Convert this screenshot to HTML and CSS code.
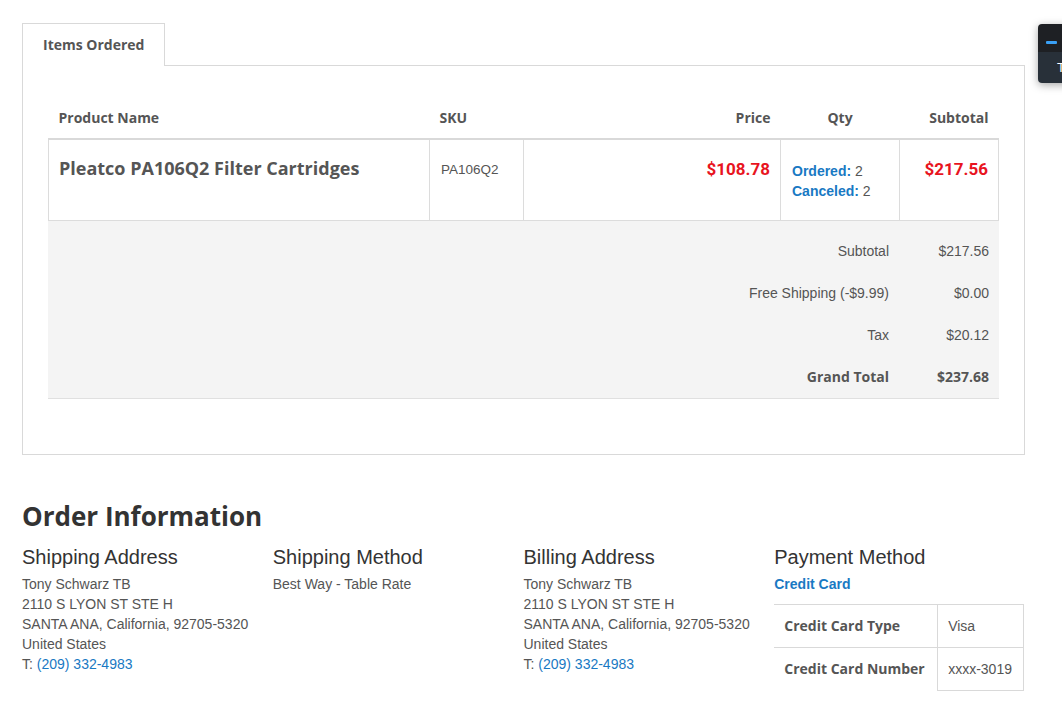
FILE: index.html
```html
<!DOCTYPE html>
<html>
<head>
<meta charset="utf-8">
<link rel="stylesheet" href="styles.css">
</head>
<body>
<div class="page">
  <div class="tabs">
    <div class="tab">Items Ordered</div>
  </div>
  <div class="tab-content">
    <table class="items">
      <thead>
        <tr>
          <th class="c-name">Product Name</th>
          <th class="c-sku">SKU</th>
          <th class="c-price">Price</th>
          <th class="c-qty">Qty</th>
          <th class="c-sub">Subtotal</th>
        </tr>
      </thead>
      <tbody>
        <tr class="item-row">
          <td class="c-name"><span class="pname">Pleatco PA106Q2 Filter Cartridges</span></td>
          <td class="c-sku">PA106Q2</td>
          <td class="c-price"><span class="money">$108.78</span></td>
          <td class="c-qty">
            <div class="qline"><span class="qlabel">Ordered:</span> 2</div>
            <div class="qline"><span class="qlabel">Canceled:</span> 2</div>
          </td>
          <td class="c-sub"><span class="money">$217.56</span></td>
        </tr>
      </tbody>
    </table>
    <div class="totals">
      <div class="trow"><span class="tlabel">Subtotal</span><span class="tval">$217.56</span></div>
      <div class="trow"><span class="tlabel">Free Shipping (-$9.99)</span><span class="tval">$0.00</span></div>
      <div class="trow"><span class="tlabel">Tax</span><span class="tval">$20.12</span></div>
      <div class="trow grand"><span class="tlabel">Grand Total</span><span class="tval">$237.68</span></div>
    </div>
  </div>

  <h2 class="info-title">Order Information</h2>
  <div class="info-grid">
    <div class="info-col">
      <h3>Shipping Address</h3>
      <div class="addr">Tony Schwarz TB<br>2110 S LYON ST STE H<br>SANTA ANA, California, 92705-5320<br>United States<br>T: <a>(209) 332-4983</a></div>
    </div>
    <div class="info-col">
      <h3>Shipping Method</h3>
      <div class="addr">Best Way - Table Rate</div>
    </div>
    <div class="info-col">
      <h3>Billing Address</h3>
      <div class="addr">Tony Schwarz TB<br>2110 S LYON ST STE H<br>SANTA ANA, California, 92705-5320<br>United States<br>T: <a>(209) 332-4983</a></div>
    </div>
    <div class="info-col">
      <h3>Payment Method</h3>
      <div class="pay-title">Credit Card</div>
      <table class="pay">
        <tr><th>Credit Card Type</th><td>Visa</td></tr>
        <tr><th>Credit Card Number</th><td>xxxx-3019</td></tr>
      </table>
    </div>
  </div>
</div>
<div class="widget">
  <div class="w-top"><span class="w-dash"></span></div>
  <div class="w-bot">T</div>
</div>
</body>
</html>
```
FILE: styles.css
```css
html, body { margin: 0; padding: 0; background: #fff; }
body { font-family: "Liberation Sans", Arial, sans-serif; color: #555; font-size: 14px; overflow: hidden; }
.page { padding: 23px 37px 20px 22px; }

.tabs { display: flex; }
.tab {
  font-family: "Open Sans", sans-serif; font-weight: 700; font-size: 14px; color: #555;
  border: 1px solid #d9d9d9; border-bottom: none; background: #fff;
  padding: 0 20px; height: 42px; line-height: 42px; white-space: nowrap;
  margin-bottom: -1px; position: relative; z-index: 1;
}
.tab-content { border: 1px solid #d9d9d9; padding: 20px 25px 55px 25px; }

.items { width: 100%; border-collapse: collapse; table-layout: fixed; }
.items th, .items td { box-sizing: border-box; }
.items th {
  font-family: "Open Sans", sans-serif; font-weight: 700; font-size: 14px; color: #555;
  height: 53px; padding: 0 10px 10px 10px; border-bottom: 2px solid #d9d9d9; vertical-align: bottom;
  line-height: 20px;
}
.items .c-name { width: 381px; text-align: left; }
.items .c-sku { width: 94px; text-align: left; }
.items .c-price { width: 257px; text-align: right; }
.items .c-qty { width: 119px; text-align: center; }
.items .c-sub { text-align: right; }
.items td { border: 1px solid #dcdcdc; border-top: none; height: 81px; vertical-align: top; padding: 0 10px; }
.items td.c-name { padding-top: 16px; }
.pname { font-family: "Open Sans", sans-serif; font-weight: 700; font-size: 18px; color: #555; }
.items td.c-sku { padding: 22px 11px 0 11px; font-size: 13.5px; }
.items td.c-price, .items td.c-sub { padding-top: 19px; }
.money { font-family: Roboto, sans-serif; font-weight: 700; font-size: 17px; color: #e8141e; }
.items td.c-qty { text-align: left; padding: 21px 11px 0 11px; font-size: 14px; }
.qline { line-height: 20px; }
.qlabel { color: #1979c3; font-weight: 700; font-family: "Liberation Sans", Arial, sans-serif; }

.totals { background: #f4f4f4; border-bottom: 1px solid #e0e0e0; padding: 9px 0 0 0; }
.trow { display: flex; justify-content: flex-end; height: 42px; align-items: center; font-size: 14px; }
.tlabel { text-align: right; }
.tval { width: 110px; text-align: right; padding-right: 10px; box-sizing: border-box; }
.trow.grand { font-family: "Open Sans", sans-serif; font-weight: 700; font-size: 14px; }

.info-title { font-family: "Open Sans", sans-serif; font-weight: 700; font-size: 26px; color: #333; margin: 43px 0 10px 0; line-height: 36px; }
.info-grid { display: grid; grid-template-columns: repeat(4, 1fr); }
.info-col h3 { font-weight: 400; font-size: 20px; color: #333; margin: 0 0 4px 0; line-height: 26px; }
.addr { font-size: 14px; line-height: 20px; color: #555; }
.addr a { color: #1979c3; }
.pay-title { font-family: "Liberation Sans", Arial, sans-serif; font-weight: 700; color: #1979c3; font-size: 14px; line-height: 20px; margin-bottom: 10px; }
.pay { border-collapse: collapse; width: 250px; }
.pay th { text-align: left; font-family: "Open Sans", sans-serif; font-weight: 700; font-size: 14px; color: #555; border-top: 1px solid #d9d9d9; height: 42px; padding: 0 10px; }
.pay td { border: 1px solid #d9d9d9; padding: 0 10px; font-size: 14px; height: 42px; }

.widget {
  position: absolute; top: 24px; left: 1038px; width: 40px; height: 59px;
  border-radius: 4px; overflow: hidden; box-shadow: 0 2px 8px rgba(0,0,0,0.35);
}
.w-top { background: #1e2024; height: 28px; position: relative; }
.w-dash { position: absolute; left: 8px; top: 17px; width: 11px; height: 3px; background: #3aa0f5; border-radius: 1px; }
.w-bot { background: #283039; height: 31px; color: #fff; font-size: 13px; padding-left: 19px; line-height: 31px; }
```
